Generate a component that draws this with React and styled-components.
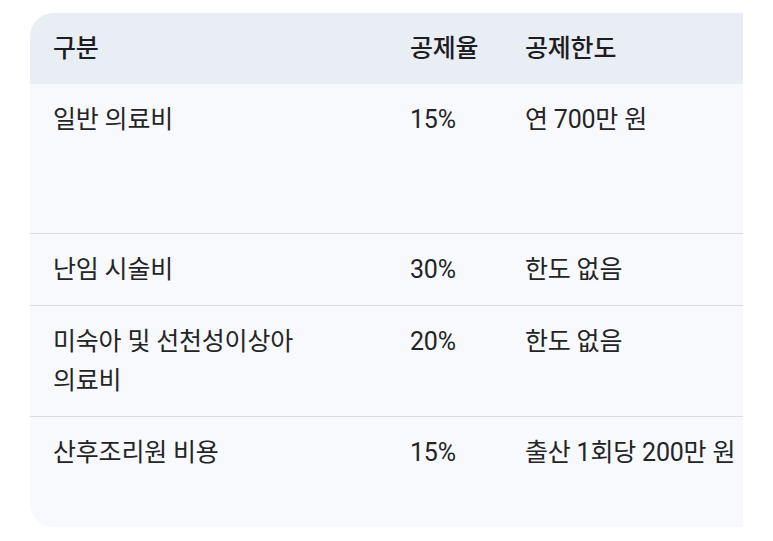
import React from "react";
import styled, { createGlobalStyle } from "styled-components";

const Global = createGlobalStyle`
  html, body { margin: 0; padding: 0; background: #ffffff; }
  body { font-family: Roboto, "Noto Sans CJK KR", sans-serif; }
`;

const Page = styled.div`
  width: 773px;
  height: 541px;
  padding: 13px 30px 0 30px;
  box-sizing: border-box;
`;

const Scroller = styled.div`
  width: 713px;
  overflow: hidden;
  border-radius: 24px 0 0 24px;
  background: #f7f9fc;
`;

const Row = styled.div`
  display: grid;
  grid-template-columns: 357px 115px 320px;
  width: 792px;
  min-height: ${(p) => p.$lines * 39}px;
  padding: 16px 0;
  box-sizing: content-box;
  background: ${(p) => (p.$head ? "#e9eef4" : "#f7f9fc")};
  border-top: ${(p) => (p.$divider ? "1px solid #d8dbe0" : "none")};
`;

const Cell = styled.div`
  padding-left: 23px;
  font-size: 25px;
  line-height: 39px;
  font-weight: ${(p) => (p.$head ? 500 : 400)};
  color: ${(p) => (p.$head ? "#1d1d1f" : "#242426")};
  white-space: ${(p) => (p.$wrap ? "normal" : "nowrap")};
  word-break: keep-all;
  max-width: ${(p) => (p.$wrap ? "270px" : "none")};
  letter-spacing: -0.2px;
`;

const rows = [
  { name: "일반 의료비", rate: "15%", limit: "연 700만 원", lines: 3 },
  { name: "난임 시술비", rate: "30%", limit: "한도 없음", lines: 1 },
  { name: "미숙아 및 선천성이상아 의료비", rate: "20%", limit: "한도 없음", lines: 2 },
  { name: "산후조리원 비용", rate: "15%", limit: "출산 1회당 200만 원", lines: 2 },
];

export default function App() {
  return (
    <Page>
      <Global />
      <Scroller>
        <Row $head $lines={1}>
          <Cell $head>구분</Cell>
          <Cell $head>공제율</Cell>
          <Cell $head>공제한도</Cell>
        </Row>
        {rows.map((r, i) => (
          <Row key={r.name} $lines={r.lines} $divider={i > 0}>
            <Cell $wrap>{r.name}</Cell>
            <Cell>{r.rate}</Cell>
            <Cell>{r.limit}</Cell>
          </Row>
        ))}
      </Scroller>
    </Page>
  );
}
